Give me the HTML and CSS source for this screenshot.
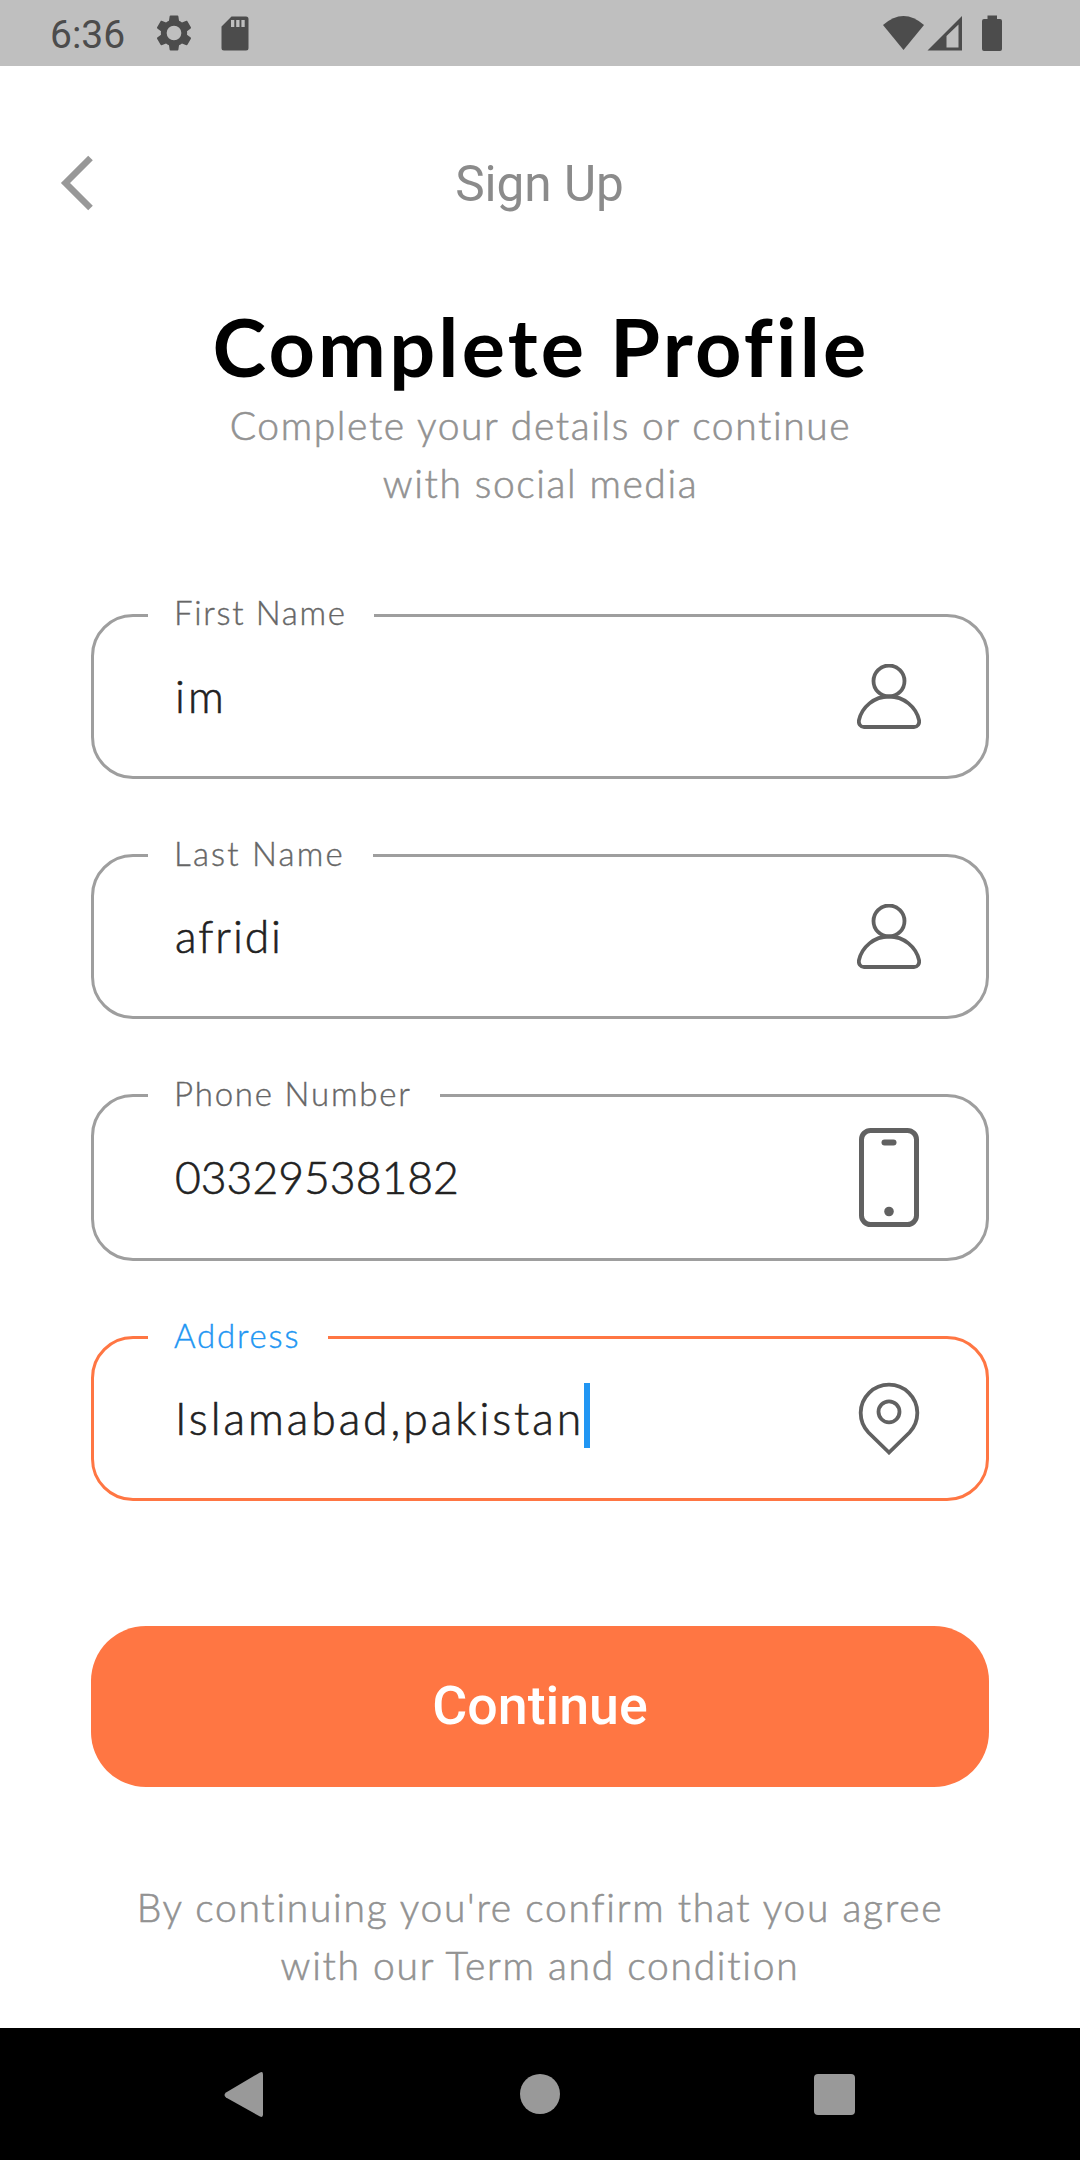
FILE: index.html
```html
<!DOCTYPE html>
<html lang="en">
<head>
<meta charset="utf-8">
<title>Sign Up</title>
<link rel="stylesheet" href="styles.css">
</head>
<body>
<div class="screen">
  <header class="status">
    <span class="clock">6:36</span>
    <svg class="gear" width="42" height="42" viewBox="0 0 24 24"><path d="M19.43 12.98c.04-.32.07-.64.07-.98s-.03-.66-.07-.98l2.11-1.65c.19-.15.24-.42.12-.64l-2-3.46c-.12-.22-.39-.3-.61-.22l-2.49 1c-.52-.4-1.08-.73-1.69-.98l-.38-2.65A.488.488 0 0 0 14 2h-4c-.25 0-.46.18-.49.42l-.38 2.65c-.61.25-1.17.59-1.69.98l-2.49-1c-.23-.09-.49 0-.61.22l-2 3.46c-.13.22-.07.49.12.64l2.11 1.65c-.04.32-.07.65-.07.98s.03.66.07.98l-2.11 1.65c-.19.15-.24.42-.12.64l2 3.46c.12.22.39.3.61.22l2.49-1c.52.4 1.08.73 1.69.98l.38 2.65c.03.24.24.42.49.42h4c.25 0 .46-.18.49-.42l.38-2.65c.61-.25 1.17-.59 1.69-.98l2.49 1c.23.09.49 0 .61-.22l2-3.46c.12-.22.07-.49-.12-.64zM12 16.2a4.2 4.2 0 1 1 0-8.400 4.200 4.200 0 0 1 0 8.400z"/></svg>
    <svg class="card" width="28" height="36" viewBox="0 0 28 36"><path fill-rule="evenodd" d="M10.500.5H25a2.500 2.500 0 0 1 2.500 2.500V32a2.500 2.500 0 0 1-2.500 2.500H3A2.500 2.500 0 0 1 .5 32V10.500zM10 4v7h3.300V4zm5.200 0v7h3.300V4zm5.200 0v7h3.300V4z"/></svg>
    <svg class="signals" width="122" height="38" viewBox="0 0 122 38"><path d="M0 10Q20.500-8 41 10L20.500 35z"/><path fill-rule="evenodd" d="M44.500 35.500L79 1v34.500zM63.500 21v11.500H75.500V9.500z"/><path d="M104.500.5h9.500V4h3a2 2 0 0 1 2 2v28a2 2 0 0 1-2 2h-16a2 2 0 0 1-2-2V6a2 2 0 0 1 2-2h3.500z"/></svg>
  </header>

  <nav class="topbar">
    <svg class="back" width="34" height="56" viewBox="0 0 34 56"><path d="M30.500 3L5.500 28l25 25" fill="none" stroke="#989898" stroke-width="6.500"/></svg>
    <span class="page">Sign Up</span>
  </nav>

  <main>
    <h1>Complete Profile</h1>
    <p class="sub">Complete your details or continue<br>with social media</p>

    <form>
      <fieldset>
        <legend class="first">First Name</legend>
        <div class="row"><span class="value im">im</span>
          <svg width="64" height="65" viewBox="0 0 64 65"><g fill="none" stroke="#616161" stroke-width="3.800"><circle cx="32" cy="17" r="15.500"/><path d="M32 32.500C17 32.500 5 43 2 56c-.8 4 1.500 7 5 7h50c3.500 0 5.800-3 5-7C59 43 47 32.500 32 32.500z"/></g></svg></div>
      </fieldset>
      <fieldset>
        <legend class="second">Last Name</legend>
        <div class="row"><span class="value last">afridi</span>
          <svg width="64" height="65" viewBox="0 0 64 65"><g fill="none" stroke="#616161" stroke-width="3.800"><circle cx="32" cy="17" r="15.500"/><path d="M32 32.500C17 32.500 5 43 2 56c-.8 4 1.500 7 5 7h50c3.500 0 5.800-3 5-7C59 43 47 32.500 32 32.500z"/></g></svg></div>
      </fieldset>
      <fieldset class="tall">
        <legend class="phone">Phone Number</legend>
        <div class="row"><span class="value digits">03329538182</span>
          <svg width="64" height="99" viewBox="0 0 64 99"><rect x="4.500" y="2.500" width="55" height="94" rx="9" fill="none" stroke="#616161" stroke-width="5"/><rect x="24.500" y="11.500" width="15" height="6" rx="3" fill="#616161"/><circle cx="32" cy="83.500" r="4.800" fill="#616161"/></svg></div>
      </fieldset>
      <fieldset class="active">
        <legend class="address">Address</legend>
        <div class="row"><span class="value city">Islamabad,pakistan</span><i class="caret"></i>
          <svg width="64" height="73" viewBox="0 0 64 73"><g fill="none" stroke="#616161" stroke-width="3.800"><path d="M32 70.500L11.500 50.500A28.300 28.300 0 1 1 52.500 50.500z"/><circle cx="32" cy="29.800" r="10.500"/></g></svg></div>
      </fieldset>
      <button type="button">Continue</button>
    </form>
    <p class="terms">By continuing you're confirm that you agree<br>with our Term and condition</p>
  </main>

  <footer class="navbar">
    <svg width="1080" height="132" viewBox="0 0 1080 132" fill="#999"><path d="M226 64.500L260 44.500Q263 43 263 46.500V86.500Q263 90 260 88.500L226 69.500Q223 67 226 64.500z"/><circle cx="540" cy="66" r="20"/><rect x="814" y="46" width="41" height="41" rx="4"/></svg>
  </footer>
</div>
</body>
</html>
```
FILE: styles.css
```css
* { box-sizing: border-box; }
body { margin: 0; background: #fff; font-family: Lato, sans-serif; font-weight: 300; }
.screen { width: 1080px; height: 2160px; display: flex; flex-direction: column; overflow: hidden; }

.status { height: 66px; background: #bfbfbf; display: flex; align-items: flex-start; padding-left: 50px; fill: #4c4c4c; }
.clock { font: 400 39px/46px Roboto, sans-serif; color: #4c4c4c; margin-top: 12px; width: 103px; }
.gear { margin-top: 12px; }
.card { margin: 16px 0 0 26px; }
.signals { margin: 15px 75px 0 auto; }

.topbar { height: 232px; padding: 88px 61px 0 60px; display: grid; grid-template-columns: 34px 1fr 34px; align-items: start; }
.back { margin-top: 1px; }
.page { font: 400 49.5px/60px Roboto, sans-serif; color: #8b8b8b; text-align: center; }

main { height: 1730px; }
h1 { margin: 0; padding-left: 2px; font-size: 81px; line-height: 96px; font-weight: 700; letter-spacing: 3.2px; color: #000; text-align: center; }
p { margin: 0; font-size: 39px; line-height: 58px; color: #929292; text-align: center; letter-spacing: 1.6px; -webkit-text-stroke: 0.6px; }
.sub { padding-top: 2px; padding-left: 1px; }

form { display: flex; flex-direction: column; padding: 83px 91px 0; }
fieldset { margin: 0 0 56px; border: 3px solid #9e9e9e; border-radius: 42px; padding: 0 65px 20px 54px; height: 184px; min-width: 0; }
legend { height: 41px; padding: 0 28px 0 26px; font-size: 33px; line-height: 37px; color: #666; letter-spacing: 1.8px; -webkit-text-stroke: 0.4px; }
.first { line-height: 35px; padding-right: 27px; letter-spacing: 1.7px; }
.second { letter-spacing: 2.2px; }
.row { display: flex; align-items: center; height: 120px; padding-left: 27px; }
.row svg { margin-left: auto; flex: none; }
.value { font-size: 44.5px; line-height: 60px; color: #212121; -webkit-text-stroke: 0.6px; }
.im { letter-spacing: 3px; }
.last { letter-spacing: 1.9px; }
.digits { margin-top: -2px; }
.city { letter-spacing: 2.95px; }
.tall { height: 186px; }
.tall .row { height: 123px; }
.active { border-color: #ff7643; }
.address { color: #2196f3; }
.caret { width: 6px; height: 65px; margin-bottom: 5px; background: #2196f3; }
button { margin-top: 69px; height: 161px; padding: 0 0 2px; border: 0; border-radius: 55px; background: #ff7643; color: #fff; font: 500 53.7px/60px Roboto, sans-serif; }
.terms { padding-top: 91px; letter-spacing: 1.72px; }
.navbar { height: 132px; background: #000; flex: none; }
.navbar svg { display: block; }
```
